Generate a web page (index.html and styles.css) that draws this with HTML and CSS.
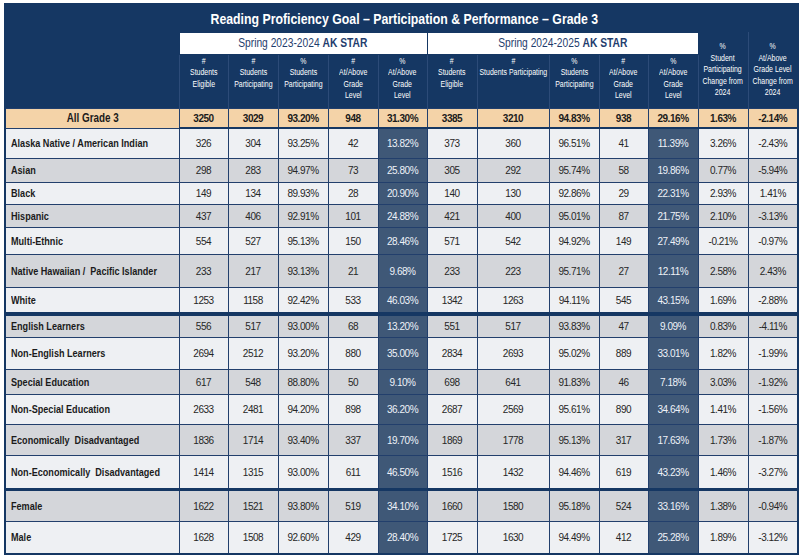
FILE: index.html
```html
<!DOCTYPE html>
<html lang="en">
<head>
<meta charset="utf-8">
<title>Reading Proficiency Goal – Grade 3</title>
<link rel="stylesheet" href="styles.css">
</head>
<body>
<table class="report">
  <colgroup>
    <col class="w-label">
    <col class="w49"><col class="w50"><col class="w50"><col class="w50"><col class="w49">
    <col class="w50"><col class="w72"><col class="w50"><col class="w49"><col class="w50">
    <col class="w50"><col class="w50">
  </colgroup>
  <thead>
    <tr class="title-row"><th colspan="13" class="title"><span class="nc">Reading Proficiency Goal – Participation &amp; Performance – Grade 3</span></th></tr>
    <tr class="spring-row">
      <th rowspan="2" class="blank"></th>
      <th colspan="5" class="spring"><span class="nc">Spring 2023-2024 <b>AK STAR</b></span></th>
      <th colspan="5" class="spring"><span class="nc">Spring 2024-2025 <b>AK STAR</b></span></th>
      <th rowspan="2" class="colh mid"><span class="nc">%<br>Student<br>Participating<br>Change from<br>2024</span></th>
      <th rowspan="2" class="colh mid"><span class="nc">%<br>At/Above<br>Grade Level<br>Change from<br>2024</span></th>
    </tr>
    <tr class="colh-row">
      <th class="colh"><span class="nc">#<br>Students<br>Eligible</span></th>
      <th class="colh"><span class="nc">#<br>Students<br>Participating</span></th>
      <th class="colh"><span class="nc">%<br>Students<br>Participating</span></th>
      <th class="colh"><span class="nc">#<br>At/Above<br>Grade<br>Level</span></th>
      <th class="colh"><span class="nc">%<br>At/Above<br>Grade<br>Level</span></th>
      <th class="colh"><span class="nc">#<br>Students<br>Eligible</span></th>
      <th class="colh"><span class="nc">#<br>Students Participating</span></th>
      <th class="colh"><span class="nc">%<br>Students<br>Participating</span></th>
      <th class="colh"><span class="nc">#<br>At/Above<br>Grade<br>Level</span></th>
      <th class="colh"><span class="nc">%<br>At/Above<br>Grade<br>Level</span></th>
    </tr>
  </thead>
  <tbody>
    <tr class="all h20"><th class="all-label"><span class="nc">All Grade 3</span></th><td>3250</td><td>3029</td><td>93.20%</td><td>948</td><td>31.30%</td><td>3385</td><td>3210</td><td>94.83%</td><td>938</td><td>29.16%</td><td>1.63%</td><td>-2.14%</td></tr>
    <tr class="light h30"><th><span class="nl">Alaska Native / American Indian</span></th><td>326</td><td>304</td><td>93.25%</td><td>42</td><td class="dk">13.82%</td><td>373</td><td>360</td><td>96.51%</td><td>41</td><td class="dk">11.39%</td><td>3.26%</td><td>-2.43%</td></tr>
    <tr class="grey h24"><th><span class="nl">Asian</span></th><td>298</td><td>283</td><td>94.97%</td><td>73</td><td class="dk">25.80%</td><td>305</td><td>292</td><td>95.74%</td><td>58</td><td class="dk">19.86%</td><td>0.77%</td><td>-5.94%</td></tr>
    <tr class="light h22"><th><span class="nl">Black</span></th><td>149</td><td>134</td><td>89.93%</td><td>28</td><td class="dk">20.90%</td><td>140</td><td>130</td><td>92.86%</td><td>29</td><td class="dk">22.31%</td><td>2.93%</td><td>1.41%</td></tr>
    <tr class="grey h23"><th><span class="nl">Hispanic</span></th><td>437</td><td>406</td><td>92.91%</td><td>101</td><td class="dk">24.88%</td><td>421</td><td>400</td><td>95.01%</td><td>87</td><td class="dk">21.75%</td><td>2.10%</td><td>-3.13%</td></tr>
    <tr class="light h27"><th><span class="nl">Multi-Ethnic</span></th><td>554</td><td>527</td><td>95.13%</td><td>150</td><td class="dk">28.46%</td><td>571</td><td>542</td><td>94.92%</td><td>149</td><td class="dk">27.49%</td><td>-0.21%</td><td>-0.97%</td></tr>
    <tr class="grey h33"><th><span class="nl">Native Hawaiian /&nbsp; Pacific Islander</span></th><td>233</td><td>217</td><td>93.13%</td><td>21</td><td class="dk">9.68%</td><td>233</td><td>223</td><td>95.71%</td><td>27</td><td class="dk">12.11%</td><td>2.58%</td><td>2.43%</td></tr>
    <tr class="light h27"><th><span class="nl">White</span></th><td>1253</td><td>1158</td><td>92.42%</td><td>533</td><td class="dk">46.03%</td><td>1342</td><td>1263</td><td>94.11%</td><td>545</td><td class="dk">43.15%</td><td>1.69%</td><td>-2.88%</td></tr>
    <tr class="grey h23 sep4"><th><span class="nl">English Learners</span></th><td>556</td><td>517</td><td>93.00%</td><td>68</td><td class="dk">13.20%</td><td>551</td><td>517</td><td>93.83%</td><td>47</td><td class="dk">9.09%</td><td>0.83%</td><td>-4.11%</td></tr>
    <tr class="light h32"><th><span class="nl">Non-English Learners</span></th><td>2694</td><td>2512</td><td>93.20%</td><td>880</td><td class="dk">35.00%</td><td>2834</td><td>2693</td><td>95.02%</td><td>889</td><td class="dk">33.01%</td><td>1.82%</td><td>-1.99%</td></tr>
    <tr class="grey h25"><th><span class="nl">Special Education</span></th><td>617</td><td>548</td><td>88.80%</td><td>50</td><td class="dk">9.10%</td><td>698</td><td>641</td><td>91.83%</td><td>46</td><td class="dk">7.18%</td><td>3.03%</td><td>-1.92%</td></tr>
    <tr class="light h30"><th><span class="nl">Non-Special Education</span></th><td>2633</td><td>2481</td><td>94.20%</td><td>898</td><td class="dk">36.20%</td><td>2687</td><td>2569</td><td>95.61%</td><td>890</td><td class="dk">34.64%</td><td>1.41%</td><td>-1.56%</td></tr>
    <tr class="grey h31"><th><span class="nl">Economically&nbsp; Disadvantaged</span></th><td>1836</td><td>1714</td><td>93.40%</td><td>337</td><td class="dk">19.70%</td><td>1869</td><td>1778</td><td>95.13%</td><td>317</td><td class="dk">17.63%</td><td>1.73%</td><td>-1.87%</td></tr>
    <tr class="light h34"><th><span class="nl">Non-Economically&nbsp; Disadvantaged</span></th><td>1414</td><td>1315</td><td>93.00%</td><td>611</td><td class="dk">46.50%</td><td>1516</td><td>1432</td><td>94.46%</td><td>619</td><td class="dk">43.23%</td><td>1.46%</td><td>-3.27%</td></tr>
    <tr class="grey h32 sep3"><th><span class="nl">Female</span></th><td>1622</td><td>1521</td><td>93.80%</td><td>519</td><td class="dk">34.10%</td><td>1660</td><td>1580</td><td>95.18%</td><td>524</td><td class="dk">33.16%</td><td>1.38%</td><td>-0.94%</td></tr>
    <tr class="light h33"><th><span class="nl">Male</span></th><td>1628</td><td>1508</td><td>92.60%</td><td>429</td><td class="dk">28.40%</td><td>1725</td><td>1630</td><td>94.49%</td><td>412</td><td class="dk">25.28%</td><td>1.89%</td><td>-3.12%</td></tr>
  </tbody>
</table>
</body>
</html>
```

FILE: styles.css
```css
* { box-sizing: border-box; }

body {
  margin: 0;
  padding: 3px 0 0 4px;
  background: #ffffff;
  font-family: "Liberation Sans", Arial, sans-serif;
  color: #262626;
}

/* Arial Narrow look: Arial glyphs compressed horizontally */
.nc, .nl {
  display: inline-block;
  white-space: nowrap;
}
.nc { transform: scaleX(0.82); transform-origin: 50% 50%; }
.nl { transform: scaleX(0.79); transform-origin: 0 50%; }

.report {
  border-collapse: collapse;
  table-layout: fixed;
  width: 793px;
  background: #153763;
  border: 2px solid #153763;
}

.w-label { width: 174px; }
.w49 { width: 49px; }
.w50 { width: 50px; }
.w72 { width: 72px; }

th, td { padding: 0; }

/* header */
.title-row { height: 28px; }
.title {
  color: #ffffff;
  font-size: 15px;
  font-weight: bold;
  text-align: center;
  vertical-align: middle;
  padding-left: 6px;
}

.spring-row { height: 22px; }
.blank { background: #153763; }
.spring {
  background: #ffffff;
  border: 1px solid #153763;
  color: #1f3d6d;
  font-size: 12.5px;
  font-weight: normal;
  text-align: center;
  vertical-align: middle;
}
.spring b { font-weight: bold; }

.colh-row { height: 54px; }
.colh {
  color: #ffffff;
  font-size: 8.5px;
  font-weight: normal;
  line-height: 11.5px;
  text-align: center;
  vertical-align: top;
  padding-top: 1px;
  border-left: 1px solid #2c4b78;
  background: #153763;
}
.colh .nc { margin: 0 -12px; }
.colh.mid { vertical-align: middle; padding-top: 0; }

/* body rows */
tbody td, tbody th {
  border: 1px solid #223f6c;
  vertical-align: middle;
}
tbody td {
  text-align: center;
  font-size: 10px;
  letter-spacing: -0.45px;
  padding-top: 1px;
}
tbody th {
  text-align: left;
  padding-left: 5px;
  font-size: 11.5px;
  font-weight: bold;
  color: #1b1b1b;
  white-space: nowrap;
}

.all td, .all th { background: #f4d3a8; font-weight: bold; color: #1b1b1b; }
.all th.all-label { text-align: center; padding-left: 0; font-size: 12px; }
.all td { border-bottom: 2px solid #153763; }

.light td, .light th { background: #eef0f3; }
.grey td, .grey th { background: #d4d6da; }
tbody td.dk { background: #3f5877; color: #eef2f7; }

.sep4 td, .sep4 th { border-top: 4px solid #153763; }
.sep3 td, .sep3 th { border-top: 3px solid #153763; }

.h20 { height: 20px; }
.h22 { height: 22px; }
.h23 { height: 23px; }
.h24 { height: 24px; }
.h25 { height: 25px; }
.h27 { height: 27px; }
.h30 { height: 30px; }
.h31 { height: 31px; }
.h32 { height: 32px; }
.h33 { height: 33px; }
.h34 { height: 34px; }
```
